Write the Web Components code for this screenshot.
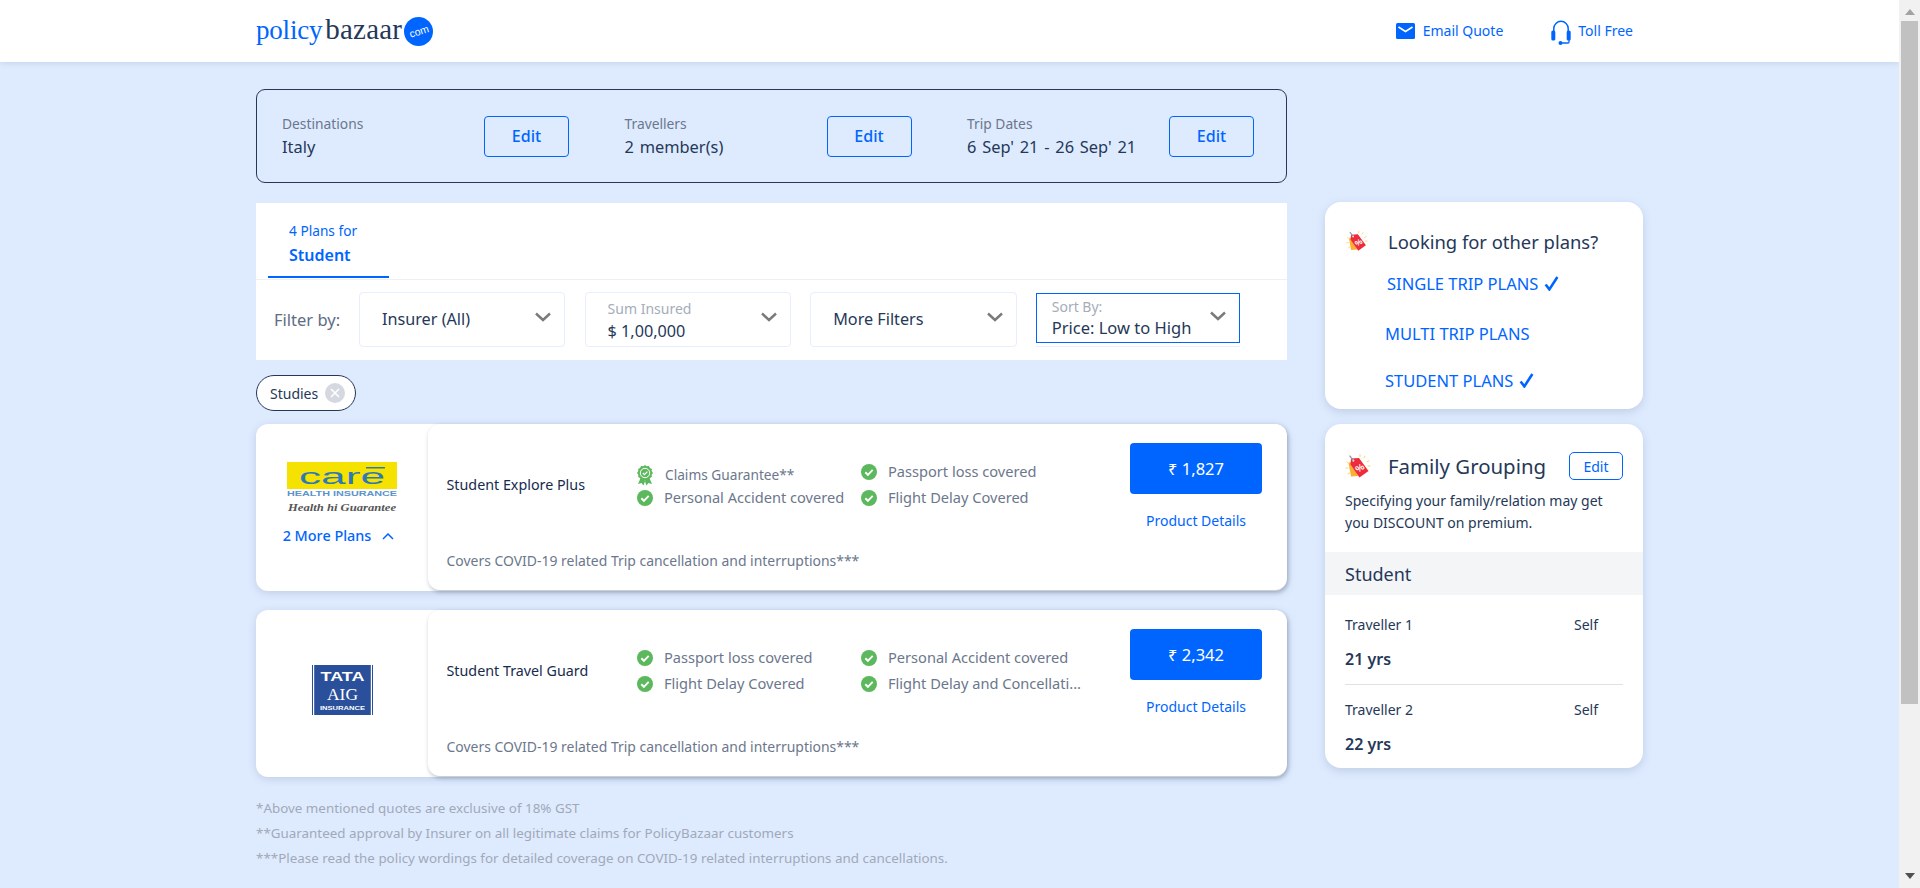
<!DOCTYPE html>
<html lang="en">
<head>
<meta charset="utf-8">
<title>Student plans</title>
<style>
    html, body { margin: 0; height: 888px; overflow: hidden; }
    body {
        font-family: "Noto Sans", "Open Sans", sans-serif;
        font-size: 14px;
        color: #253858;
        background: #deebff;
    }
</style>
</head>
<body>
<pb-page>
    <pb-header></pb-header>
    <pb-layout>
        <div slot="left">
            <pb-trip-summary>
                <pb-trip-item label="Destinations" value="Italy"></pb-trip-item>
                <pb-trip-item label="Travellers" value="2 member(s)"></pb-trip-item>
                <pb-trip-item label="Trip Dates" value="6 Sep' 21 - 26 Sep' 21"></pb-trip-item>
            </pb-trip-summary>
            <pb-filter-panel count="4 Plans for" name="Student">
                <pb-select value="Insurer (All)"></pb-select>
                <pb-select label="Sum Insured" value="$ 1,00,000"></pb-select>
                <pb-select value="More Filters"></pb-select>
                <pb-select label="Sort By:" value="Price: Low to High" focused></pb-select>
            </pb-filter-panel>
            <pb-chip>Studies</pb-chip>
            <pb-plan-card name="Student Explore Plus" price="₹ 1,827" more="2 More Plans" style="--logo-top:38px">
                <care-logo slot="logo"></care-logo>
                <pb-feature award>Claims Guarantee**</pb-feature>
                <pb-feature>Passport loss covered</pb-feature>
                <pb-feature>Personal Accident covered</pb-feature>
                <pb-feature>Flight Delay Covered</pb-feature>
            </pb-plan-card>
            <pb-plan-card name="Student Travel Guard" price="₹ 2,342" style="--logo-top:55px">
                <tata-logo slot="logo"></tata-logo>
                <pb-feature>Passport loss covered</pb-feature>
                <pb-feature>Personal Accident covered</pb-feature>
                <pb-feature>Flight Delay Covered</pb-feature>
                <pb-feature>Flight Delay and Concellati...</pb-feature>
            </pb-plan-card>
            <pb-footnotes>
                <div>*Above mentioned quotes are exclusive of 18% GST</div>
                <div>**Guaranteed approval by Insurer on all legitimate claims for PolicyBazaar customers</div>
                <div>***Please read the policy wordings for detailed coverage on COVID-19 related interruptions and cancellations.</div>
            </pb-footnotes>
        </div>
        <div slot="right">
            <pb-other-plans></pb-other-plans>
            <pb-family-group></pb-family-group>
        </div>
    </pb-layout>
</pb-page>
<pb-scrollbar></pb-scrollbar>

<script>
const tagIcon = `
    <svg viewBox="0 0 26 26" width="100%" height="100%">
        <g stroke="#fbd36b" stroke-width="1" stroke-linecap="round">
            <path d="M15 1.5v2M20 3l-1 1.8M24 8l-2 .8M25 13h-2M2 9l1.5 1M1 15h2M3 21l1.5-1"/>
        </g>
        <path d="M10 7 3.5 10 6 23.5l7-.5z" fill="#fbb034"/>
        <path d="M6 5.500 14 5l9.500 13-9 6.500-9-13z" fill="#ee2b3b"/>
        <circle cx="8.300" cy="7.600" r="1.100" fill="#fff"/>
        <path d="M8.300 7.600 4.600 2.600" stroke="#8b97a8" stroke-width="1.300" fill="none"/>
        <text x="15" y="18" font-family="Liberation Sans, sans-serif" font-size="9.500" font-weight="700" fill="#fff" text-anchor="middle" transform="rotate(-35 15 15)">%</text>
    </svg>`;

class PbPage extends HTMLElement {
    constructor() {
        super();
        this.attachShadow({ mode: 'open' });
        this.shadowRoot.innerHTML = `
            <style>
                :host { display: block; width: 1899px; height: 888px; overflow: hidden; }
            </style>
            <slot></slot>
        `;
    }
}

class PbHeader extends HTMLElement {
    constructor() {
        super();
        this.attachShadow({ mode: 'open' });
        this.shadowRoot.innerHTML = `
            <style>
                :host {
                    display: flex;
                    align-items: center;
                    height: 62px;
                    padding-left: 256px;
                    background: #fff;
                    box-shadow: 0 1px 6px rgba(37,56,88,0.14);
                    position: relative;
                }
                .logo { display: flex; align-items: center; height: 62px; font-family: "Liberation Serif", serif; }
                .policy { color: #0065ff; font-size: 27px; letter-spacing: -0.2px; margin-top: -2px; }
                .bazaar { color: #253858; font-size: 29px; letter-spacing: 0.2px; margin-left: 3px; margin-top: -3px; }
                .com {
                    width: 29px;
                    height: 29px;
                    margin-left: 2px;
                    border-radius: 50%;
                    background: #0065ff;
                    color: #fff;
                    display: flex;
                    align-items: center;
                    justify-content: center;
                    font: 10.5px "Liberation Sans", sans-serif;
                }
                .com span { transform: rotate(-18deg); }
                nav { margin-left: auto; margin-right: 266px; display: flex; align-items: center; color: #0065ff; }
                .mail { margin-right: 8px; display: block; }
                .head { margin-left: 48px; margin-right: 7px; display: block; margin-top: 3px; }
                .txt { margin-top: -1px; }
            </style>
            <div class="logo">
                <span class="policy">policy</span><span class="bazaar">bazaar</span>
                <span class="com"><span>com</span></span>
            </div>
            <nav>
                <svg class="mail" width="19" height="16" viewBox="0 0 19 16">
                    <rect width="19" height="16" rx="1.5" fill="#0065ff"/>
                    <path d="M2.5 4 9.5 8.5 16.5 4" fill="none" stroke="#fff" stroke-width="1.6"/>
                </svg>
                <span class="txt">Email Quote</span>
                <svg class="head" width="20" height="25" viewBox="0 0 20 25">
                    <path d="M2.8 11V8.5a7.2 7.2 0 0 1 14.4 0V11" fill="none" stroke="#0065ff" stroke-width="1.5"/>
                    <rect x="0.3" y="10.5" width="4" height="10" rx="1.6" fill="#0065ff"/>
                    <rect x="15.7" y="10.5" width="4" height="10" rx="1.6" fill="#0065ff"/>
                    <path d="M18 20v2.2q0 .8-1 .8H10" fill="none" stroke="#0065ff" stroke-width="1.3"/>
                    <circle cx="9.5" cy="23" r="2" fill="#0065ff"/>
                </svg>
                <span class="txt">Toll Free</span>
            </nav>
        `;
    }
}

class PbLayout extends HTMLElement {
    constructor() {
        super();
        this.attachShadow({ mode: 'open' });
        this.shadowRoot.innerHTML = `
            <style>
                :host {
                    display: grid;
                    grid-template-columns: 1031px 318px;
                    column-gap: 38px;
                    padding-left: 256px;
                }
                .left { padding-top: 27px; }
                .right { padding-top: 140px; }
            </style>
            <div class="left"><slot name="left"></slot></div>
            <div class="right"><slot name="right"></slot></div>
        `;
    }
}

class PbEditButton extends HTMLElement {
    constructor() {
        super();
        this.attachShadow({ mode: 'open' });
        this.shadowRoot.innerHTML = `
            <style>
                :host {
                    display: flex;
                    align-items: center;
                    justify-content: center;
                    box-sizing: border-box;
                    width: 85px;
                    height: 41px;
                    border: 1px solid #0065ff;
                    border-radius: 4px;
                    color: #0065ff;
                    font-size: 16px;
                    font-weight: 500;
                }
            </style>
            <slot>Edit</slot>
        `;
    }
}

class PbTripSummary extends HTMLElement {
    constructor() {
        super();
        this.attachShadow({ mode: 'open' });
        this.shadowRoot.innerHTML = `
            <style>
                :host {
                    display: grid;
                    grid-template-columns: 342.5px 342.5px 1fr;
                    box-sizing: border-box;
                    height: 94px;
                    border: 1px solid #253858;
                    border-radius: 9px;
                    align-items: center;
                    margin-bottom: 20px;
                }
            </style>
            <slot></slot>
        `;
    }
}

class PbTripItem extends HTMLElement {
    constructor() {
        super();
        this.attachShadow({ mode: 'open' });
        this.shadowRoot.innerHTML = `
            <style>
                :host { display: flex; align-items: center; padding-left: 25px; }
                .text { width: 202px; }
                .label { color: #6b778c; font-size: 13.8px; line-height: 21px; }
                .value { font-size: 16.4px; word-spacing: 1.5px; line-height: 25px; white-space: nowrap; }
            </style>
            <div class="text">
                <div class="label">${this.getAttribute('label')}</div>
                <div class="value">${this.getAttribute('value')}</div>
            </div>
            <pb-edit-button></pb-edit-button>
        `;
    }
}

class PbFilterPanel extends HTMLElement {
    constructor() {
        super();
        this.attachShadow({ mode: 'open' });
        this.shadowRoot.innerHTML = `
            <style>
                :host { display: block; background: #fff; }
                .tabs { height: 76px; border-bottom: 1px solid #eef0f4; padding-left: 12px; }
                .tab {
                    box-sizing: border-box;
                    width: 121px;
                    height: 75px;
                    padding: 18px 0 0 21px;
                    border-bottom: 2px solid #0065ff;
                    color: #0065ff;
                }
                .count { font-size: 13.7px; line-height: 20px; }
                .name { font-size: 16px; font-weight: 600; line-height: 24px; margin-top: 2px; }
                .filters { display: flex; align-items: flex-start; height: 80px; box-sizing: border-box; padding: 12px 0 0 18px; }
                .by { width: 85px; line-height: 55px; color: #5e6c84; font-size: 16.5px; }
                .row { display: flex; gap: 19.2px; }
            </style>
            <div class="tabs">
                <div class="tab">
                    <div class="count">${this.getAttribute('count')}</div>
                    <div class="name">${this.getAttribute('name')}</div>
                </div>
            </div>
            <div class="filters">
                <div class="by">Filter by:</div>
                <div class="row"><slot></slot></div>
            </div>
        `;
    }
}

class PbSelect extends HTMLElement {
    constructor() {
        super();
        this.attachShadow({ mode: 'open' });
        const label = this.getAttribute('label');
        this.shadowRoot.innerHTML = `
            <style>
                :host { display: block; width: 206.4px; box-sizing: border-box; }
                :host([focused]) { width: 204px; height: 55px; border-bottom: 1px solid #e9f1ff; }
                .box {
                    box-sizing: border-box;
                    height: 55px;
                    border: 1px solid #e6efff;
                    border-radius: 4px;
                    display: flex;
                    align-items: center;
                    justify-content: space-between;
                    padding: 0 12px 0 22px;
                    color: #253858;
                }
                :host([focused]) .box {
                    height: 50px;
                    margin-top: 1px;
                    border-color: #0065ff;
                    border-radius: 0;
                    padding-left: 15px;
                    padding-right: 12px;
                }
                .plain { font-size: 16.2px; margin-top: -1px; }
                .label { color: #a5adba; font-size: 14px; line-height: 20px; }
                .value { font-size: 16.2px; line-height: 24px; white-space: nowrap; }
                :host([focused]) .value { font-size: 16.5px; }
                .stack { margin-top: 3px; }
                :host([focused]) .stack { margin-top: 2px; }
                :host([focused]) .label { line-height: 18px; }
                svg { display: block; margin-top: -5px; }
            </style>
            <div class="box">
                ${label
                    ? `<div class="stack"><div class="label">${label}</div><div class="value">${this.getAttribute('value')}</div></div>`
                    : `<div class="plain">${this.getAttribute('value')}</div>`}
                <svg width="18" height="10" viewBox="0 0 18 10"><path d="M2 1.5 9 8l7-6.5" fill="none" stroke="#7a7a7a" stroke-width="2.4"/></svg>
            </div>
        `;
    }
}

class PbChip extends HTMLElement {
    constructor() {
        super();
        this.attachShadow({ mode: 'open' });
        this.shadowRoot.innerHTML = `
            <style>
                :host {
                    display: flex;
                    align-items: center;
                    box-sizing: border-box;
                    width: 100px;
                    height: 36px;
                    margin: 15px 0 13px;
                    padding-left: 13px;
                    background: #fff;
                    border: 1px solid #253858;
                    border-radius: 18px;
                    font-size: 14px;
                }
                svg { margin-left: 7px; display: block; }
            </style>
            <slot></slot>
            <svg width="20" height="20" viewBox="0 0 20 20">
                <circle cx="10" cy="10" r="10" fill="#d5d8e0"/>
                <path d="M6 6l8 8M14 6l-8 8" stroke="#fff" stroke-width="1.6"/>
            </svg>
        `;
    }
}

class PbFeature extends HTMLElement {
    constructor() {
        super();
        this.attachShadow({ mode: 'open' });
        const icon = this.hasAttribute('award')
            ? `<svg class="award" width="16" height="21" viewBox="0 0 16 21">
                    <path d="M4 12 1 19l3.5-1 2 2.5L8.5 15zM12 12l3 7-3.5-1-2 2.5L7.500 15z" fill="#5cb85c"/>
                    <path d="M8 0l1.800 1.300 2.200-.3.900 2 2 .9-.3 2.200L16 8l-1.400 1.800.3 2.200-2 .9-.9 2-2.200-.3L8 16l-1.800-1.400-2.200.3-.9-2-2-.9.3-2.200L0 8l1.400-1.900-.3-2.200 2-.9.9-2 2.200.3z" fill="#5cb85c"/>
                    <circle cx="8" cy="8" r="4.700" fill="none" stroke="#fff" stroke-width="1"/>
                    <path d="M5.800 8l1.600 1.600 3-3" fill="none" stroke="#fff" stroke-width="1.300"/>
               </svg>`
            : `<svg width="16" height="16" viewBox="0 0 16 16">
                    <circle cx="8" cy="8" r="8" fill="#5cb85c"/>
                    <path d="M4.300 8.300l2.600 2.500 4.800-4.900" fill="none" stroke="#fff" stroke-width="1.900"/>
               </svg>`;
        this.shadowRoot.innerHTML = `
            <style>
                :host {
                    display: flex;
                    align-items: center;
                    height: 20px;
                    color: #6b778c;
                    font-size: 14.6px;
                    line-height: 18px;
                    white-space: nowrap;
                }
                svg { display: block; flex: none; margin-right: 11px; }
                .label { margin-top: -1px; }
                :host([award]) { margin-top: 4px; margin-bottom: -4px; font-size: 13.7px; }
                .award { margin-right: 12px; margin-top: -1px; }
            </style>
            ${icon}<span class="label"><slot></slot></span>
        `;
    }
}

class PbPlanCard extends HTMLElement {
    constructor() {
        super();
        this.attachShadow({ mode: 'open' });
        const more = this.getAttribute('more');
        this.shadowRoot.innerHTML = `
            <style>
                :host {
                    display: flex;
                    height: 167px;
                    margin-bottom: 19px;
                    background: #fff;
                    border-radius: 12px;
                    box-shadow: 0 2px 8px rgba(37,56,88,0.16);
                }
                .insurer {
                    width: 172px;
                    flex: none;
                    box-sizing: border-box;
                    padding-top: var(--logo-top);
                    display: flex;
                    flex-direction: column;
                    align-items: center;
                }
                .more {
                    display: flex;
                    align-items: center;
                    margin-top: 13px;
                    margin-right: 7px;
                    line-height: 20px;
                    color: #0065ff;
                    font-weight: 500;
                    font-size: 14.4px;
                    white-space: nowrap;
                }
                .more svg { margin-left: 11px; display: block; }
                .plan {
                    flex: 1;
                    height: 166px;
                    box-sizing: border-box;
                    padding: 19px 25px 0 18.500px;
                    display: flex;
                    background: #fff;
                    border-radius: 12px;
                    box-shadow: 1px 2px 4px rgba(23,43,77,0.3);
                }
                .info { flex: 1; }
                .top { display: flex; align-items: center; height: 83px; }
                .name { width: 190.500px; flex: none; color: #172b4d; font-size: 14.3px; margin-top: -1px; }
                .features { display: grid; grid-template-columns: 224px 1fr; row-gap: 6px; }
                .covers { margin-top: 25px; line-height: 20px; color: #6b778c; font-size: 13.95px; }
                .price { width: 132px; flex: none; }
                .buy {
                    height: 51px;
                    background: #0065ff;
                    border-radius: 4px;
                    color: #fff;
                    font-size: 16.5px;
                    display: flex;
                    align-items: center;
                    justify-content: center;
                }
                .details { margin-top: 17px; line-height: 20px; text-align: center; color: #0065ff; font-size: 14px; }
            </style>
            <div class="insurer">
                <slot name="logo"></slot>
                ${more ? `<div class="more">${more}<svg width="12" height="7" viewBox="0 0 12 7"><path d="M1 6l5-5 5 5" fill="none" stroke="#0065ff" stroke-width="1.500"/></svg></div>` : ''}
            </div>
            <div class="plan">
                <div class="info">
                    <div class="top">
                        <div class="name">${this.getAttribute('name')}</div>
                        <div class="features"><slot></slot></div>
                    </div>
                    <div class="covers">Covers COVID-19 related Trip cancellation and interruptions***</div>
                </div>
                <div class="price">
                    <div class="buy">${this.getAttribute('price')}</div>
                    <div class="details">Product Details</div>
                </div>
            </div>
        `;
    }
}

class CareLogo extends HTMLElement {
    constructor() {
        super();
        this.attachShadow({ mode: 'open' });
        this.shadowRoot.innerHTML = `
            <style>:host { display: block; width: 110px; height: 51px; } svg { display: block; }</style>
            <svg width="110" height="51" viewBox="0 0 110 51">
                <rect width="110" height="27" fill="#f6e200"/>
                <text x="12" y="22" font-family="Liberation Sans, sans-serif" font-size="22" fill="#2f78b7" textLength="86" lengthAdjust="spacingAndGlyphs">care</text>
                <rect x="79" y="5" width="19" height="1.500" fill="#2f78b7"/>
                <text x="0" y="33.500" font-family="Liberation Sans, sans-serif" font-size="6.500" font-weight="700" fill="#5b93cc" textLength="110" lengthAdjust="spacingAndGlyphs">HEALTH INSURANCE</text>
                <text x="1" y="49" font-family="Liberation Serif, serif" font-size="10.500" font-style="italic" font-weight="700" fill="#555" textLength="108" lengthAdjust="spacingAndGlyphs">Health hi Guarantee</text>
            </svg>
        `;
    }
}

class TataLogo extends HTMLElement {
    constructor() {
        super();
        this.attachShadow({ mode: 'open' });
        this.shadowRoot.innerHTML = `
            <style>:host { display: block; width: 61px; height: 50px; } svg { display: block; }</style>
            <svg width="61" height="50" viewBox="0 0 61 50">
                <rect width="61" height="50" fill="#2a4f9b"/>
                <rect x="1" width="1.200" height="50" fill="#fff"/>
                <rect x="58.800" width="1.200" height="50" fill="#fff"/>
                <text x="30.500" y="16" font-family="Liberation Sans, sans-serif" font-size="13" font-weight="700" fill="#fff" text-anchor="middle" textLength="44" lengthAdjust="spacingAndGlyphs">TATA</text>
                <text x="30.500" y="35" font-family="Liberation Serif, serif" font-size="17" fill="#fff" text-anchor="middle" textLength="31" lengthAdjust="spacingAndGlyphs">AIG</text>
                <text x="30.500" y="45" font-family="Liberation Sans, sans-serif" font-size="6" font-weight="700" fill="#fff" text-anchor="middle" textLength="45" lengthAdjust="spacingAndGlyphs">INSURANCE</text>
            </svg>
        `;
    }
}

class PbFootnotes extends HTMLElement {
    constructor() {
        super();
        this.attachShadow({ mode: 'open' });
        this.shadowRoot.innerHTML = `
            <style>
                :host { display: block; color: #a1a9b8; font-size: 13.4px; line-height: 25px; }
            </style>
            <slot></slot>
        `;
    }
}

class PbOtherPlans extends HTMLElement {
    constructor() {
        super();
        this.attachShadow({ mode: 'open' });
        const check = `<svg class="check" width="15" height="15" viewBox="0 0 14 14"><path d="M1.500 8l3.500 4.500L12.500 1" fill="none" stroke="#0065ff" stroke-width="2.400"/></svg>`;
        this.shadowRoot.innerHTML = `
            <style>
                :host {
                    display: block;
                    box-sizing: border-box;
                    height: 207px;
                    margin-bottom: 15px;
                    background: #fff;
                    border-radius: 16px;
                    box-shadow: 0 3px 10px rgba(37,56,88,0.16);
                    padding: 26px 0 0 21px;
                }
                .head { display: flex; align-items: center; height: 26px; font-size: 18.4px; }
                .tag { width: 22px; height: 22px; margin-right: 20px; }
                .item { display: flex; align-items: center; height: 24px; color: #0065ff; font-size: 16.5px; white-space: nowrap; }
                .check { margin-left: 6px; display: block; }
                .one { margin: 17px 0 0 41px; }
                .two { margin: 26px 0 0 39px; }
                .three { margin: 23px 0 0 39px; }
            </style>
            <div class="head"><span class="tag">${tagIcon}</span>Looking for other plans?</div>
            <div class="item one">SINGLE TRIP PLANS ${check}</div>
            <div class="item two">MULTI TRIP PLANS</div>
            <div class="item three">STUDENT PLANS ${check}</div>
        `;
    }
}

class PbFamilyGroup extends HTMLElement {
    constructor() {
        super();
        this.attachShadow({ mode: 'open' });
        this.shadowRoot.innerHTML = `
            <style>
                :host {
                    display: block;
                    box-sizing: border-box;
                    height: 344px;
                    background: #fff;
                    border-radius: 16px;
                    box-shadow: 0 3px 10px rgba(37,56,88,0.16);
                    overflow: hidden;
                }
                .head { display: flex; align-items: center; height: 28px; margin: 28px 20px 0 20px; font-size: 20.4px; }
                .tag { width: 26px; height: 26px; margin-right: 17px; }
                .edit {
                    margin-left: auto;
                    box-sizing: border-box;
                    width: 54px;
                    height: 28px;
                    border: 1px solid #0065ff;
                    border-radius: 5px;
                    color: #0065ff;
                    font-size: 14px;
                    display: flex;
                    align-items: center;
                    justify-content: center;
                }
                .desc { margin: 10px 20px 0; font-size: 14px; line-height: 22px; }
                .band { margin-top: 18px; height: 43px; line-height: 45px; padding-left: 20px; background: #f4f5f7; font-size: 18px; }
                .traveller { margin: 0 20px; height: 89px; box-sizing: border-box; padding-top: 20px; }
                .traveller + .traveller { border-top: 1px solid #dfe1e6; padding-top: 15px; height: 84px; }
                .who { display: grid; grid-template-columns: 229px 1fr; line-height: 20px; font-size: 14px; }
                .age { margin-top: 12px; line-height: 24px; font-size: 16px; font-weight: 600; }
            </style>
            <div class="head"><span class="tag">${tagIcon}</span>Family Grouping<span class="edit">Edit</span></div>
            <div class="desc">Specifying your family/relation may get<br>you DISCOUNT on premium.</div>
            <div class="band">Student</div>
            <div class="traveller">
                <div class="who"><span>Traveller 1</span><span>Self</span></div>
                <div class="age">21 yrs</div>
            </div>
            <div class="traveller">
                <div class="who"><span>Traveller 2</span><span>Self</span></div>
                <div class="age">22 yrs</div>
            </div>
        `;
    }
}

class PbScrollbar extends HTMLElement {
    constructor() {
        super();
        this.attachShadow({ mode: 'open' });
        this.shadowRoot.innerHTML = `
            <style>
                :host {
                    display: flex;
                    flex-direction: column;
                    align-items: center;
                    width: 21px;
                    height: 888px;
                    background: #f1f1f1;
                    position: absolute;
                    top: 0;
                    right: 0;
                }
                svg { display: block; margin-top: 9px; }
                .thumb { width: 17px; height: 683px; margin-top: 6px; background: #c1c1c1; }
                .down { margin-top: auto; margin-bottom: 9px; }
            </style>
            <svg width="10" height="6" viewBox="0 0 10 6"><path d="M5 0l5 6H0z" fill="#a3a3a3"/></svg>
            <div class="thumb"></div>
            <svg class="down" width="10" height="6" viewBox="0 0 10 6"><path d="M5 6l5-6H0z" fill="#505050"/></svg>
        `;
    }
}

customElements.define('pb-page', PbPage);
customElements.define('pb-header', PbHeader);
customElements.define('pb-layout', PbLayout);
customElements.define('pb-edit-button', PbEditButton);
customElements.define('pb-trip-summary', PbTripSummary);
customElements.define('pb-trip-item', PbTripItem);
customElements.define('pb-filter-panel', PbFilterPanel);
customElements.define('pb-select', PbSelect);
customElements.define('pb-chip', PbChip);
customElements.define('pb-feature', PbFeature);
customElements.define('pb-plan-card', PbPlanCard);
customElements.define('care-logo', CareLogo);
customElements.define('tata-logo', TataLogo);
customElements.define('pb-footnotes', PbFootnotes);
customElements.define('pb-other-plans', PbOtherPlans);
customElements.define('pb-family-group', PbFamilyGroup);
customElements.define('pb-scrollbar', PbScrollbar);
</script>
</body>
</html>
